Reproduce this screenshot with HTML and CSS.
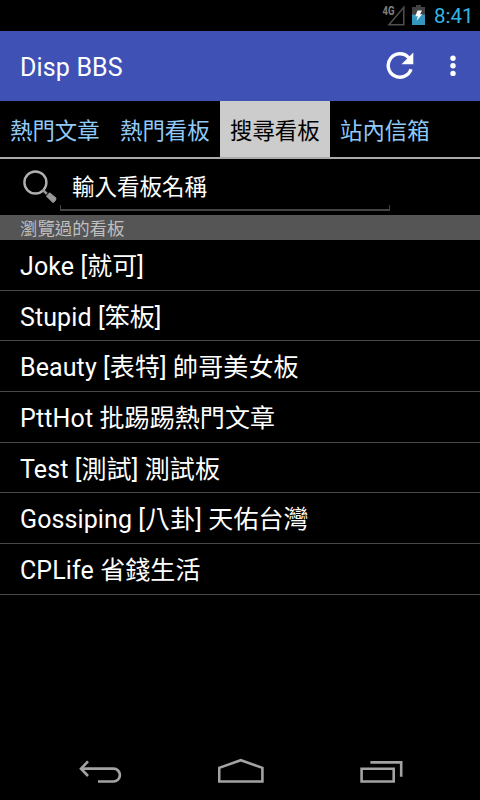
FILE: index.html
```html
<!DOCTYPE html>
<html lang="zh-Hant">
<head>
    <meta charset="UTF-8">
    <meta name="viewport" content="width=device-width, initial-scale=1.0">
    <title>Disp BBS</title>
    <link rel="stylesheet" href="styles.css">
</head>
<body>
    <div class="status-bar">
        <svg class="signal" width="24" height="21" viewBox="0 0 24 21">
            <text class="network" x="0.5" y="9.6" textLength="12" lengthAdjust="spacingAndGlyphs">4G</text>
            <path d="M7 19.8H21.8V2.2Z" fill="none" stroke="#505050" stroke-width="1.5"/>
        </svg>
        <svg class="battery" width="13" height="20" viewBox="0 0 13 20">
            <path d="M4 0h5v2h4v8H0V2h4z" fill="#424242"/>
            <path d="M0 9.5h13V20H0z" fill="#3597bd"/>
            <path d="M5.5 5.5H10L8 9.3h2.2L4.6 15.8l1.2-4.6H3.3z" fill="#fff"/>
        </svg>
        <span class="clock">8:41</span>
    </div>

    <header class="action-bar">
        <h1>Disp BBS</h1>
        <svg class="refresh" width="28" height="28" viewBox="0 0 28 28">
            <path d="M22.6 5.6A11.7 11.7 0 1 0 25 17.2" fill="none" stroke="#fff" stroke-width="3.4"/>
            <path d="M27.3 .5V12.3H15.5z" fill="#fff"/>
        </svg>
        <svg class="more" width="6" height="22" viewBox="0 0 6 22">
            <circle cx="3" cy="3.2" r="2.7" fill="#fff"/>
            <circle cx="3" cy="10.8" r="2.7" fill="#fff"/>
            <circle cx="3" cy="18.4" r="2.7" fill="#fff"/>
        </svg>
    </header>

    <nav class="tabs">
        <a class="tab">熱門文章</a>
        <a class="tab">熱門看板</a>
        <a class="tab active">搜尋看板</a>
        <a class="tab">站內信箱</a>
    </nav>

    <section class="search">
        <svg class="magnifier" width="36" height="36" viewBox="0 0 36 36">
            <circle cx="13.4" cy="13.5" r="11" fill="none" stroke="#b0b0b0" stroke-width="2.4"/>
            <path d="M20.8 20.8l4 4" stroke="#999" stroke-width="2.6"/>
            <path d="M24.4 27.2l3.2-3.4 6.4 5.2q.6 2.4-3 4.6z" fill="#999" stroke="#999" stroke-width="1" stroke-linejoin="round"/>
        </svg>
        <div class="search-field">輸入看板名稱</div>
    </section>

    <h2 class="list-header">瀏覽過的看板</h2>
    <ul class="board-list">
        <li>Joke [就可]</li>
        <li>Stupid [笨板]</li>
        <li>Beauty [表特] 帥哥美女板</li>
        <li>PttHot 批踢踢熱門文章</li>
        <li>Test [測試] 測試板</li>
        <li>Gossiping [八卦] 天佑台灣</li>
        <li>CPLife 省錢生活</li>
    </ul>

    <footer class="nav-bar">
        <svg width="44" height="26" viewBox="0 0 44 26">
            <path d="M3 10.7H35.5a6 6 0 0 1 0 12.8H20" fill="none" stroke="#a3a3a3" stroke-width="2.7"/>
            <path d="M10 3.4L3 10.7l7 7.3" fill="none" stroke="#a3a3a3" stroke-width="2.6"/>
        </svg>
        <svg width="46" height="26" viewBox="0 0 46 26">
            <path d="M1.2 23.5V9.9L22.8 2.2l21.6 7.7v13.6z" fill="none" stroke="#a3a3a3" stroke-width="2.6"/>
        </svg>
        <svg width="44" height="26" viewBox="0 0 44 26">
            <path d="M1.6 10.7h32.1v12.8H1.6z" fill="none" stroke="#a3a3a3" stroke-width="2.6"/>
            <path d="M10.4 4.4h30.8v14.4" fill="none" stroke="#a3a3a3" stroke-width="2.6"/>
        </svg>
    </footer>
</body>
</html>
```
FILE: styles.css
```css
* {
    box-sizing: border-box;
}
body {
    margin: 0;
    height: 800px;
    display: flex;
    flex-direction: column;
    overflow: hidden;
    background: #000;
    color: #fff;
    font-family: Roboto, "Noto Sans CJK TC", sans-serif;
}
svg {
    display: block;
    flex: none;
}
.status-bar {
    height: 31px;
    flex: none;
    display: flex;
    justify-content: flex-end;
    padding: 5px 9px 0 0;
}
.network {
    font-size: 12px;
    font-weight: bold;
    fill: #808080;
}
.battery {
    margin-left: 6px;
}
.clock {
    margin-left: 9px;
    width: 37px;
    font-size: 20.5px;
    line-height: 23px;
    color: #33b5e5;
    white-space: nowrap;
}
.action-bar {
    height: 70px;
    flex: none;
    display: flex;
    align-items: center;
    padding: 0 24px 0 20px;
    background: #3f51b5;
}
.action-bar h1 {
    flex: 1;
    margin: 2px 0 0;
    font-size: 25px;
    font-weight: normal;
    letter-spacing: 0.15px;
}
.more {
    margin-left: 36px;
}
.tabs {
    height: 58px;
    flex: none;
    display: flex;
    border-bottom: 2px solid #aaa;
}
.tab {
    width: 110px;
    padding-left: 10px;
    font-size: 22.4px;
    line-height: 60px;
    height: 56px;
    color: #90caf9;
}
.tab.active {
    background: #ccc;
    color: #000;
}
.search {
    height: 56px;
    flex: none;
    display: flex;
    padding: 10px 90px 0 22px;
}
.search-field {
    position: relative;
    flex: 1;
    margin-left: 2px;
    padding-left: 12px;
    height: 42px;
    font-size: 22.5px;
    line-height: 36px;
    border-bottom: 2px solid #444;
}
/* short upturned ends of the underline */
.search-field::after {
    content: "";
    position: absolute;
    left: 0;
    right: 0;
    bottom: 0;
    height: 4px;
    border: solid #444;
    border-width: 0 1px;
}
.list-header {
    height: 25px;
    flex: none;
    margin: 0;
    padding-left: 20px;
    background: #555;
    color: #bebebe;
    font-size: 17.4px;
    line-height: 28px;
    font-weight: normal;
}
.board-list {
    flex: 1;
    margin: 0;
    padding: 0;
    list-style: none;
}
.board-list li {
    height: 50.7px;
    padding-left: 20px;
    border-bottom: 1px solid #484848;
    font-size: 25px;
    line-height: 53.4px;
    letter-spacing: 0.1px;
}
.nav-bar {
    height: 60px;
    flex: none;
    display: flex;
    justify-content: space-between;
    padding: 18px 76px 0 78px;
}
```
